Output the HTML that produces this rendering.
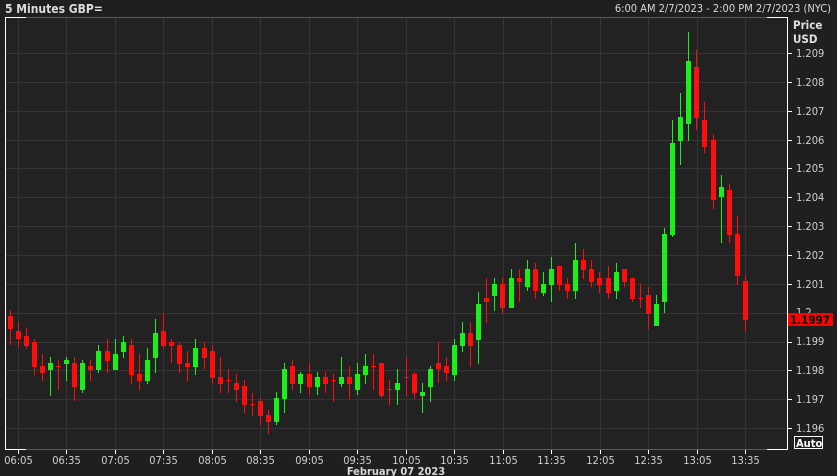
<!DOCTYPE html>
<html><head><meta charset="utf-8"><style>
html,body{margin:0;padding:0;background:#1f1f1f;width:837px;height:476px;overflow:hidden}
svg{display:block}
text{font-family:"DejaVu Sans Condensed","Liberation Sans",sans-serif}
</style></head><body>
<svg id="s" width="837" height="476" viewBox="0 0 837 476" xmlns="http://www.w3.org/2000/svg">
<rect x="0" y="0" width="837" height="476" fill="#1f1f1f"/>
<rect x="5" y="17" width="783" height="432" fill="#222222"/>
<g id="grid" stroke="#343434" stroke-width="1"></g>
<g id="candles"></g>
<line x1="5" y1="17.5" x2="788" y2="17.5" stroke="#5a5a5a"/>
<line x1="5" y1="449.5" x2="788" y2="449.5" stroke="#5a5a5a"/>
<line x1="5" y1="17.5" x2="26" y2="17.5" stroke="#fff"/>
<line x1="767" y1="17.5" x2="788" y2="17.5" stroke="#fff"/>
<line x1="5" y1="449.5" x2="26" y2="449.5" stroke="#fff"/>
<line x1="767" y1="449.5" x2="788" y2="449.5" stroke="#fff"/>
<line x1="5.5" y1="17" x2="5.5" y2="450" stroke="#fff"/>
<line x1="787.5" y1="17" x2="787.5" y2="450" stroke="#fff"/>
<g id="ticks" stroke="#fff"></g>
<text x="5" y="13" font-size="12" font-weight="bold" fill="#dcdcdc">5 Minutes GBP=</text>
<text x="831" y="12" font-size="11" fill="#d8d8d8" text-anchor="end">6:00 AM 2/7/2023 - 2:00 PM 2/7/2023 (NYC)</text>
<text x="793" y="29" font-size="11.5" font-weight="bold" fill="#e0e0e0">Price</text>
<text x="793" y="43" font-size="11.5" font-weight="bold" fill="#e0e0e0">USD</text>
<g font-size="11" fill="#cfcfcf">
<text x="796" y="57">1.209</text>
<text x="796" y="86">1.208</text>
<text x="796" y="115">1.207</text>
<text x="796" y="144">1.206</text>
<text x="796" y="172">1.205</text>
<text x="796" y="201">1.204</text>
<text x="796" y="230">1.203</text>
<text x="796" y="259">1.202</text>
<text x="796" y="288">1.201</text>
<text x="796" y="316">1.2</text>
<text x="796" y="345">1.199</text>
<text x="796" y="374">1.198</text>
<text x="796" y="403">1.197</text>
<text x="796" y="432">1.196</text>
</g>
<rect x="788" y="313" width="45" height="13" fill="#ff0000"/>
<text x="790" y="324" font-size="11.5" font-weight="bold" fill="#000">1.1997</text>
<rect x="794.5" y="436.5" width="28" height="12" fill="none" stroke="#fff"/>
<text x="796" y="447" font-size="11" font-weight="bold" fill="#fff">Auto</text>
<g id="xl" font-size="11" fill="#cfcfcf" text-anchor="middle"></g>
<text x="396" y="475" font-size="11" font-weight="bold" fill="#d8d8d8" text-anchor="middle">February 07 2023</text>
</svg>
<script>
var NS="http://www.w3.org/2000/svg";
function el(p,t,a){var e=document.createElementNS(NS,t);for(var k in a)e.setAttribute(k,a[k]);p.appendChild(e);return e;}
var grid=document.getElementById('grid'),ticks=document.getElementById('ticks'),xl=document.getElementById('xl');
for(var i=0;i<14;i++){var y=Math.round(53+i*28.85)+.5;el(grid,'line',{x1:5,y1:y,x2:787,y2:y});el(ticks,'line',{x1:788,y1:y,x2:792,y2:y});}
var labs=["06:05","06:35","07:05","07:35","08:05","08:35","09:05","09:35","10:05","10:35","11:05","11:35","12:05","12:35","13:05","13:35"];
for(var i=0;i<16;i++){var x=Math.round(17.6+i*48.5)+.5;el(grid,'line',{x1:x,y1:18,x2:x,y2:449});el(ticks,'line',{x1:x,y1:450,x2:x,y2:454});var t=el(xl,'text',{x:x,y:464});t.textContent=labs[i];}
var D=[
[316,329,310,345,'r'],[331,339,322,347,'r'],[336,346,328,349,'r'],[342,367,339,375,'r'],[366,373,354,381,'r'],
[363,370,357,396,'g'],[366,367,360,390,'r'],[360,364,357,381,'g'],[363,387,357,401,'r'],[363,390,360,393,'g'],
[366,370,360,381,'r'],[351,370,345,373,'g'],[351,361,339,373,'r'],[354,370,339,370,'g'],[342,352,336,358,'g'],
[345,375,339,384,'r'],[374,381,354,390,'r'],[360,381,348,384,'g'],[333,358,319,373,'g'],[331,346,313,349,'r'],
[342,346,339,363,'r'],[345,364,342,373,'r'],[363,367,351,381,'r'],[348,367,339,375,'g'],[348,358,342,369,'r'],
[351,378,345,383,'r'],[377,384,357,393,'r'],[380,381,369,393,'r'],[383,390,374,402,'r'],[386,405,380,413,'r'],
[404,405,393,416,'r'],[401,416,398,425,'r'],[415,422,410,434,'r'],[398,422,392,425,'g'],[369,399,363,413,'g'],
[366,384,360,390,'r'],[374,384,372,393,'g'],[374,387,363,395,'r'],[377,387,372,395,'g'],[377,384,372,393,'r'],
[380,381,374,402,'r'],[377,384,357,387,'g'],[377,384,366,399,'r'],[374,390,363,395,'g'],[366,375,354,384,'g'],
[366,367,354,390,'r'],[363,396,363,398,'r'],[389,390,380,405,'r'],[383,390,369,405,'g'],[377,378,357,396,'r'],
[374,393,372,399,'r'],[392,396,383,413,'g'],[369,387,366,402,'g'],[363,369,342,383,'r'],[366,373,357,381,'r'],
[345,375,339,381,'g'],[333,346,322,352,'g'],[333,346,322,367,'r'],[304,340,292,364,'g'],[298,302,278,323,'r'],
[284,296,278,311,'g'],[284,308,278,314,'r'],[278,308,269,308,'g'],[278,282,269,302,'r'],[269,287,260,291,'g'],
[269,291,263,299,'r'],[284,293,272,296,'g'],[269,285,257,302,'g'],[266,285,266,291,'r'],[284,291,278,299,'r'],
[260,291,243,299,'g'],[260,270,249,279,'r'],[269,282,260,287,'r'],[278,285,272,293,'r'],[278,293,266,299,'r'],
[272,291,263,299,'g'],[269,282,269,287,'r'],[278,299,278,302,'r'],[298,299,284,308,'r'],[295,314,287,329,'r'],
[304,326,295,326,'g'],[234,302,228,313,'g'],[143,235,120,237,'g'],[117,141,93,165,'g'],[61,124,32,141,'g'],
[67,118,50,130,'r'],[120,147,102,153,'r'],[140,200,134,209,'r'],[187,197,175,243,'g'],[190,235,184,243,'r'],
[234,276,216,285,'r'],[281,320,275,332,'r']];
var cg=document.getElementById('candles');
for(var i=0;i<D.length;i++){var d=D[i],x=Math.round(9.6+8.08*i),c=d[4]=='g'?'#19f019':'#ff0d0d';
el(cg,'rect',{x:x,y:d[2],width:1,height:d[3]-d[2],fill:c});
el(cg,'rect',{x:x-2,y:d[0],width:5,height:Math.max(1,d[1]-d[0]),fill:c});}
</script>
</body></html>
